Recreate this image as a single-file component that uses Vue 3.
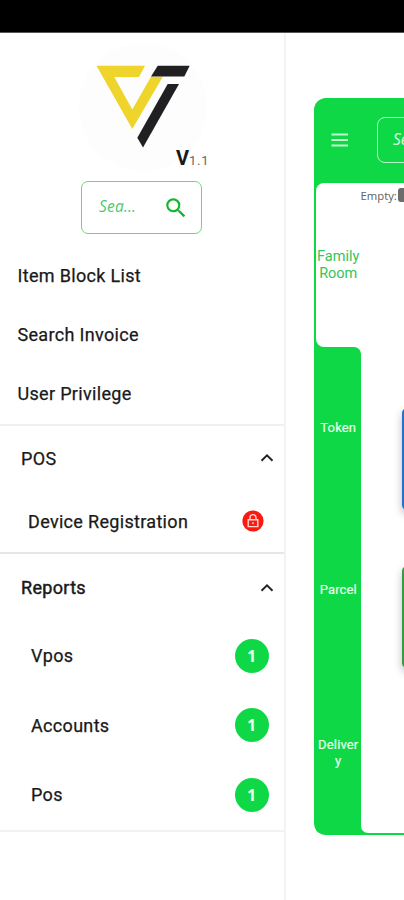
<script setup>
const links = ['Item Block List', 'Search Invoice', 'User Privilege']
const reports = [
  { name: 'Vpos', count: 1 },
  { name: 'Accounts', count: 1 },
  { name: 'Pos', count: 1 },
]
const tabs = ['Token', 'Parcel', 'Delivery']
</script>

<template>
  <div class="screen">
    <div class="status"></div>
    <div class="body">
      <aside class="drawer">
        <div class="brand">
          <svg class="logo" width="160" height="142" viewBox="66 33 160 142">
            <circle cx="143" cy="107" r="64" fill="#fdfdfd" />
            <path fill="#efd42b" d="M96.5 65.8H145L139 77H114.3L132.3 109.5L151 76.7H162.8L132.3 129Z" />
            <path fill="#202022" d="M157.7 65.8H189.7L184.3 76.4H151Z" />
            <path fill="#202022" d="M167.7 84H179L143 147.5L137.3 137.7Z" />
          </svg>
          <div class="version"><b>V</b><span>1.1</span></div>
        </div>
        <div class="search">
          <span>Sea...</span>
          <svg width="26" height="26" viewBox="0 0 24 24"><path fill="#12b52c" d="M15.5 14h-.79l-.28-.27A6.47 6.47 0 0 0 16 9.5 6.5 6.5 0 1 0 9.5 16c1.61 0 3.09-.59 4.23-1.57l.27.28v.79l5 4.99L20.49 19l-4.99-5zm-6 0C7.01 14 5 11.99 5 9.5S7.01 5 9.5 5 14 7.01 14 9.5 11.99 14 9.5 14z" /></svg>
        </div>
        <nav class="links">
          <div v-for="l in links" :key="l" class="link">{{ l }}</div>
        </nav>
        <section class="group pos">
          <div class="head"><span>POS</span>
            <svg width="14" height="10" viewBox="0 0 14 10"><path d="M1.5 7.8L7 2.4L12.5 7.8" fill="none" stroke="#222" stroke-width="1.9" /></svg>
          </div>
          <div class="row device"><span>Device Registration</span>
            <svg width="22" height="22" viewBox="0 0 22 22">
              <circle cx="11" cy="11" r="10.6" fill="#fb1a10" />
              <path d="M6.2 9.7H15.8V16.6H6.2ZM8 9.5V7.6a3 3 0 0 1 6 0V9.5" fill="none" stroke="#ffd8d4" stroke-width="1.4" />
              <circle cx="11" cy="13.2" r="1.1" fill="#ff9c94" />
            </svg>
          </div>
        </section>
        <section class="group reports">
          <div class="head"><span>Reports</span>
            <svg width="14" height="10" viewBox="0 0 14 10"><path d="M1.5 7.8L7 2.4L12.5 7.8" fill="none" stroke="#222" stroke-width="1.9" /></svg>
          </div>
          <div v-for="r in reports" :key="r.name" class="row"><span>{{ r.name }}</span><b class="badge">{{ r.count }}</b></div>
        </section>
      </aside>
      <main class="main">
        <div class="card">
          <header class="bar">
            <svg width="18" height="14" viewBox="0 0 18 14"><path d="M.5 1.5H17M.5 7H17M.5 12.5H17" stroke="#c5f8cf" stroke-width="2.2" /></svg>
            <div class="field">Sea...</div>
          </header>
          <div class="panel">
            <div class="tabs">
              <div class="active">Family Room</div>
              <div class="rest">
                <div v-for="t in tabs" :key="t" class="tab">{{ t }}</div>
              </div>
            </div>
            <div class="content">
              <div class="legend"><span>Empty:</span><i></i></div>
              <div class="tile blue"></div>
              <div class="tile green"></div>
            </div>
          </div>
        </div>
      </main>
    </div>
  </div>
</template>

<style>
body { overflow: hidden; background: #fff; }
</style>

<style scoped>
* { box-sizing: border-box; }
.screen { width: 404px; height: 900px; overflow: hidden; background: #fff; font-family: Roboto, "Liberation Sans", sans-serif; color: #191919; display: flex; flex-direction: column; }
.status { height: 33px; background: #000; border-bottom: 1px solid #555; flex: none; }
.body { flex: 1; display: flex; min-height: 0; }
.drawer { width: 286px; flex: none; border-right: 2px solid #f3f3f3; }
.brand { height: 148px; position: relative; }
.logo { display: block; margin-left: 66px; }
.version { position: absolute; left: 176px; top: 113px; height: 24px; line-height: 24px; white-space: nowrap; }
.version b { font-size: 20px; font-weight: 700; }
.version span { font-size: 13px; letter-spacing: .7px; color: #666; }
.search { margin-left: 81px; width: 121px; height: 53px; border: 1px solid #6fd18a; border-radius: 7px; display: flex; align-items: center; justify-content: space-between; padding: 0 12px 0 17px; }
.search span { font: italic 15.5px "Open Sans", sans-serif; letter-spacing: .2px; color: #4cc96c; margin-top: -3px; }
.links { padding: 11.5px 0 0 17.5px; height: 190px; }
.link { height: 59px; line-height: 59px; }
.link, .head, .row { font-size: 18px; font-weight: 400; letter-spacing: .32px; -webkit-text-stroke: .25px #191919; }
.group { border-top: 2px solid #f0f0f0; }
.head { height: 64px; padding: 0 10px 0 21px; display: flex; justify-content: space-between; align-items: center; }
.row { height: 69.5px; padding: 0 15.5px 0 31px; display: flex; justify-content: space-between; align-items: center; }
.row.device { height: 62px; padding: 0 20px 0 28px; }
.reports { border-top-color: #e6e6e6; border-bottom: 2px solid #f2f2f2; }
.reports .head { height: 67px; -webkit-text-stroke-width: .45px; }
.badge { width: 34px; height: 34px; border-radius: 50%; background: #0ed845; color: #e9ffee; font: 700 16px/34px "Open Sans", sans-serif; text-align: center; letter-spacing: 0; -webkit-text-stroke: 0; }
.main { flex: 1; min-width: 0; padding: 65px 0 0 28px; overflow: hidden; }
.card { width: 130px; height: 737px; background: #0ed845; border-radius: 12px 0 0 12px; overflow: hidden; display: flex; flex-direction: column; }
.bar { height: 85px; flex: none; display: flex; align-items: center; gap: 28px; padding: 0 0 2px 17px; }
.bar svg { flex: none; }
.field { width: 100px; flex: none; height: 46px; border: 1px solid #b5f5c3; border-radius: 8px; padding-left: 15px; font: italic 15.5px/43px "Open Sans", sans-serif; color: #e1ffe7; }
.panel { flex: 1; display: flex; padding: 0 0 2px 2px; min-height: 0; }
.tabs { width: 44.5px; flex: none; background: linear-gradient(90deg, #0ed845 50%, #fff 50%); text-align: center; }
.active { height: 163.5px; background: #fff; border-radius: 8px 0 0 8px; display: flex; align-items: center; justify-content: center; color: #35c458; font-size: 14.5px; line-height: 17px; padding-top: 1px; }
.rest { height: 486.5px; background: #0ed845; border-radius: 0 7px 0 0; color: #e6ffeb; }
.tab { height: 162.5px; display: flex; align-items: center; justify-content: center; word-break: break-all; font-size: 13px; line-height: 16px; letter-spacing: .15px; -webkit-text-stroke: .2px #e6ffeb; }
.tab:last-child { padding: 0 2px; }
.content { flex: 1; background: #fff; border-radius: 0 0 0 7px; min-width: 0; }
.legend { height: 225px; padding-top: 5px; display: flex; align-items: flex-start; gap: 1px; font: 11.3px/15px "Open Sans", sans-serif; color: #606060; }
.legend i { width: 14px; height: 14px; flex: none; border-radius: 3px; background: #6c6c6c; }
.tile { width: 60px; margin-left: 41.5px; border-radius: 5px; box-shadow: 0 4px 8px #0004; }
.blue { height: 102px; background: #2870cb; margin-bottom: 56px; }
.green { height: 102px; background: #3b9b43; }
</style>
